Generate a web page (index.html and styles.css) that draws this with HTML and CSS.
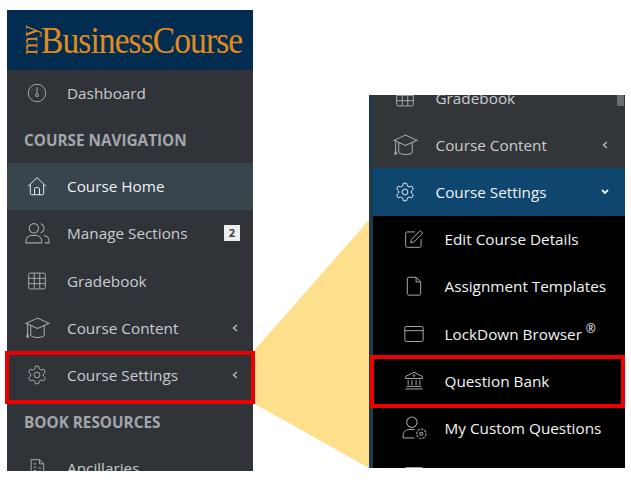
FILE: index.html
```html
<!DOCTYPE html>
<html lang="en">
<head>
    <meta charset="UTF-8">
    <title>Course Settings - Question Bank</title>
    <link rel="stylesheet" href="styles.css">
</head>
<body>

    <div class="stage">
        <svg class="wedge" width="631" height="492" viewBox="0 0 631 492"><polygon points="253,352 369,220 369,468 253,403" fill="#fddf8c"/></svg>

        <div class="sidebar">
            <div class="logo">
                <span class="logo-my">my</span><span class="logo-name">BusinessCourse</span>
            </div>
            <div class="item">
                <svg class="icon" viewBox="0 0 24 24"><circle cx="12" cy="12" r="10.500"/><path d="M12 5v7.500"/><circle cx="12" cy="14.500" r="1.800"/><path d="M5.500 11.500h.8M17.700 11.500h.8M7.500 7l.5.5M16.500 7l-.5.5"/></svg>
                <span class="text">Dashboard</span>
            </div>
            <div class="heading">COURSE NAVIGATION</div>
            <div class="item current">
                <svg class="icon" viewBox="0 0 24 24"><path d="M1 12.500L12 2l11 10.500M4 10v11a1.500 1.500 0 0 0 1.500 1.500h13A1.500 1.500 0 0 0 20 21V10"/><path d="M9 22.500V15a1 1 0 0 1 1-1h4a1 1 0 0 1 1 1v7.500"/></svg>
                <span class="text">Course Home</span>
            </div>
            <div class="item">
                <svg class="icon icon-wide" viewBox="0 0 24 24"><circle cx="8.500" cy="7" r="4.500"/><path d="M15 2.700a4.500 4.500 0 0 1 0 8.600"/><path d="M1 21v-2c0-3 2.500-5 5-5h5c2.500 0 5 2 5 5v2zM18 14c3 .3 5 2.200 5 5v2h-4"/></svg>
                <span class="text">Manage Sections</span>
                <span class="badge">2</span>
            </div>
            <div class="item">
                <svg class="icon" viewBox="0 0 24 24"><rect x="2" y="2.500" width="20" height="19" rx="1.500"/><path d="M2 8.800h20M2 15.200h20M8.700 2.500v19M15.300 2.500v19"/></svg>
                <span class="text">Gradebook</span>
            </div>
            <div class="item">
                <svg class="icon icon-wide" viewBox="0 0 24 24"><path d="M12 3L1 8l11 5 11-5z"/><path d="M5.500 10.500V19c0 1.500 3 2.500 6.500 2.500s6.500-1 6.500-2.500v-8.500M2.500 9v9"/><path d="M1.500 21l1-3 1 3z"/></svg>
                <span class="text">Course Content</span>
                <svg class="chev" width="6" height="8" viewBox="0 0 6 8"><path d="M5 1L1.500 4 5 7"/></svg>
            </div>
            <div class="item">
                <svg class="icon" viewBox="0 0 24 24"><circle cx="12" cy="12" r="3.500"/><path d="M10 1.500h4l.7 3.200 2.300 1.300 3.100-1 2 3.500-2.400 2.200v2.600l2.400 2.200-2 3.500-3.100-1-2.300 1.300-.7 3.200h-4l-.7-3.200L7 18l-3.100 1-2-3.500 2.400-2.200v-2.600L1.900 8.500l2-3.500L7 6l2.300-1.300z" stroke-linejoin="round"/></svg>
                <span class="text">Course Settings</span>
                <svg class="chev" width="6" height="8" viewBox="0 0 6 8"><path d="M5 1L1.500 4 5 7"/></svg>
            </div>
            <div class="heading">BOOK RESOURCES</div>
            <div class="item">
                <svg class="icon" viewBox="0 0 24 24"><path d="M5 2h10l5 5v15H5z"/><path d="M15 2v5h5M8 7h3M8 11h3M8 15h3M14 12h3M14 16h3"/></svg>
                <span class="text">Ancillaries</span>
            </div>
        </div>

        <div class="zoomed">
            <div class="scroll-thumb"></div>
            <div class="zoomed-inner">
                <div class="item">
                    <svg class="icon" viewBox="0 0 24 24"><rect x="2" y="2.500" width="20" height="19" rx="1.500"/><path d="M2 8.800h20M2 15.200h20M8.700 2.500v19M15.300 2.500v19"/></svg>
                    <span class="text">Gradebook</span>
                </div>
                <div class="item">
                    <svg class="icon icon-wide" viewBox="0 0 24 24"><path d="M12 3L1 8l11 5 11-5z"/><path d="M5.500 10.500V19c0 1.500 3 2.500 6.500 2.500s6.500-1 6.500-2.500v-8.500M2.500 9v9"/><path d="M1.500 21l1-3 1 3z"/></svg>
                    <span class="text">Course Content</span>
                    <svg class="chev" width="6" height="8" viewBox="0 0 6 8"><path d="M5 1L1.500 4 5 7"/></svg>
                </div>
                <div class="item open">
                    <svg class="icon" viewBox="0 0 24 24"><circle cx="12" cy="12" r="3.500"/><path d="M10 1.500h4l.7 3.200 2.300 1.300 3.100-1 2 3.500-2.400 2.200v2.600l2.400 2.200-2 3.500-3.100-1-2.300 1.300-.7 3.200h-4l-.7-3.200L7 18l-3.100 1-2-3.500 2.400-2.200v-2.600L1.900 8.500l2-3.500L7 6l2.300-1.300z" stroke-linejoin="round"/></svg>
                    <span class="text">Course Settings</span>
                    <svg class="chev-down" width="8" height="6" viewBox="0 0 8 6"><path d="M1 1l3 3 3-3"/></svg>
                </div>
                <div class="submenu">
                    <div class="item">
                        <svg class="icon" viewBox="0 0 24 24"><path d="M13 3.500H4a2 2 0 0 0-2 2V20a2 2 0 0 0 2 2h14.500a2 2 0 0 0 2-2v-8"/><path d="M9 12.500L19.500 2l3 3L12 15.500l-4 1z"/></svg>
                        <span class="text">Edit Course Details</span>
                    </div>
                    <div class="item">
                        <svg class="icon" viewBox="0 0 24 24"><path d="M6 1.500h8.500L20 7v14a2 2 0 0 1-2 2H6a2 2 0 0 1-2-2V3.500a2 2 0 0 1 2-2z"/><path d="M14.500 1.500V7H20"/></svg>
                        <span class="text">Assignment Templates</span>
                    </div>
                    <div class="item">
                        <svg class="icon" viewBox="0 0 24 24"><rect x="1" y="3" width="22" height="18" rx="2"/><path d="M1 8h22"/></svg>
                        <span class="text">LockDown Browser <sup class="reg">&reg;</sup></span>
                    </div>
                    <div class="item">
                        <svg class="icon" viewBox="0 0 24 24"><path d="M12 1.500L2 6.500V9h20V6.500z"/><circle cx="12" cy="5.500" r="1"/><path d="M5 11v6M9.500 11v6M14.500 11v6M19 11v6M3 18.500h18M1.500 21.500h21"/></svg>
                        <span class="text">Question Bank</span>
                    </div>
                    <div class="item">
                        <svg class="icon icon-wide" viewBox="0 0 24 24"><circle cx="9.500" cy="7" r="5"/><path d="M1 22v-2c0-3.500 2.500-6 6-6h5"/><path d="M1 22h11"/><circle cx="18.500" cy="18" r="1.500"/><circle cx="18.500" cy="18" r="4.500" stroke-dasharray="2.400 1"/></svg>
                        <span class="text">My Custom Questions</span>
                    </div>
                    <div class="item">
                        <svg class="icon" viewBox="0 0 24 24"><rect x="1" y="3" width="22" height="18" rx="2"/></svg>
                        <span class="text"></span>
                    </div>
                </div>
            </div>
        </div>

        <div class="redbox redbox-left"></div>
        <div class="redbox redbox-right"></div>
    </div>

</body>
</html>
```

FILE: styles.css
```css
html, body {
    margin: 0;
    padding: 0;
    background-color: #fff;
}
.stage {
    position: relative;
    width: 631px;
    height: 492px;
    overflow: hidden;
    display: flex;
    align-items: flex-start;
    font-family: "Open Sans", sans-serif;
}
.wedge {
    position: absolute;
    left: 0;
    top: 0;
}
.sidebar {
    position: relative;
    width: 246px;
    height: 461px;
    margin: 10px 0 0 7px;
    overflow: hidden;
    background-color: #303439;
}
.logo {
    height: 60px;
    background-color: #022c50;
    display: flex;
    align-items: center;
    padding-left: 14px;
    color: #e08c1e;
    font-family: "Liberation Serif", serif;
}
.logo-my {
    width: 17px;
    font-size: 24px;
    line-height: 17px;
    letter-spacing: -1px;
    writing-mode: vertical-rl;
    transform: rotate(180deg);
}
.logo-name {
    font-size: 37px;
    letter-spacing: -1px;
    margin-left: 3px;
    transform: scaleX(0.905);
    transform-origin: left center;
}
.item {
    box-sizing: border-box;
    height: 47.200px;
    display: flex;
    align-items: center;
    padding-left: 20px;
    padding-bottom: 1px;
    color: #c9ccd0;
    font-size: 15.300px;
}
.icon {
    width: 20px;
    height: 20px;
    flex: none;
    fill: none;
    stroke: #a4a7ab;
    stroke-width: 1.200;
}
.icon-wide {
    width: 25px;
    height: 25px;
    margin: 0 -2.500px;
    stroke-width: 1;
}
.text {
    margin-left: 20px;
    white-space: nowrap;
}
.heading {
    height: 46px;
    line-height: 46px;
    padding-left: 17px;
    color: #a3a6aa;
    font-size: 15.300px;
    font-weight: 700;
}
.current {
    background-color: #38454d;
    color: #eef0f2;
}
.current .icon {
    stroke: #e6e8ea;
}
.badge {
    margin-left: auto;
    margin-right: 13px;
    width: 16px;
    height: 16px;
    line-height: 16px;
    text-align: center;
    background-color: #eceef0;
    color: #3b3f44;
    font-size: 11px;
    font-weight: 700;
}
.chev {
    margin-left: auto;
    margin-right: 15px;
    fill: none;
    stroke: #b4b7ba;
    stroke-width: 1.500;
}
.zoomed {
    position: relative;
    width: 256px;
    height: 373px;
    margin: 95px 0 0 116px;
    overflow: hidden;
    box-sizing: border-box;
    border-left: 4px solid #1d3b4c;
    background-color: #000;
}
.zoomed-inner {
    margin-top: -21px;
}
.zoomed .item {
    background-color: #333638;
    padding-left: 22px;
    padding-bottom: 0;
}
.zoomed .text {
    margin-left: 20.500px;
}
.zoomed .chev {
    margin-right: 17px;
}
.zoomed .open {
    background-color: #0e466f;
    color: #f2f4f6;
}
.zoomed .open .icon {
    stroke: #e6e8ea;
}
.chev-down {
    margin-left: auto;
    margin-right: 16px;
    fill: none;
    stroke: #f2f4f6;
    stroke-width: 1.800;
}
.zoomed .submenu .item {
    padding-left: 31px;
    background-color: #000;
    color: #f4f4f4;
}
.reg {
    font-size: 12px;
    line-height: 0;
    vertical-align: 7px;
}
.scroll-thumb {
    position: absolute;
    z-index: 1;
    right: 1px;
    top: 0;
    width: 7px;
    height: 11px;
    background-color: #6b6e70;
}
.redbox {
    position: absolute;
    box-sizing: border-box;
    border: 4px solid #ee0000;
}
.redbox-left {
    left: 5px;
    top: 351px;
    width: 250px;
    height: 53px;
}
.redbox-right {
    left: 370px;
    top: 355px;
    width: 255px;
    height: 53px;
}
```
